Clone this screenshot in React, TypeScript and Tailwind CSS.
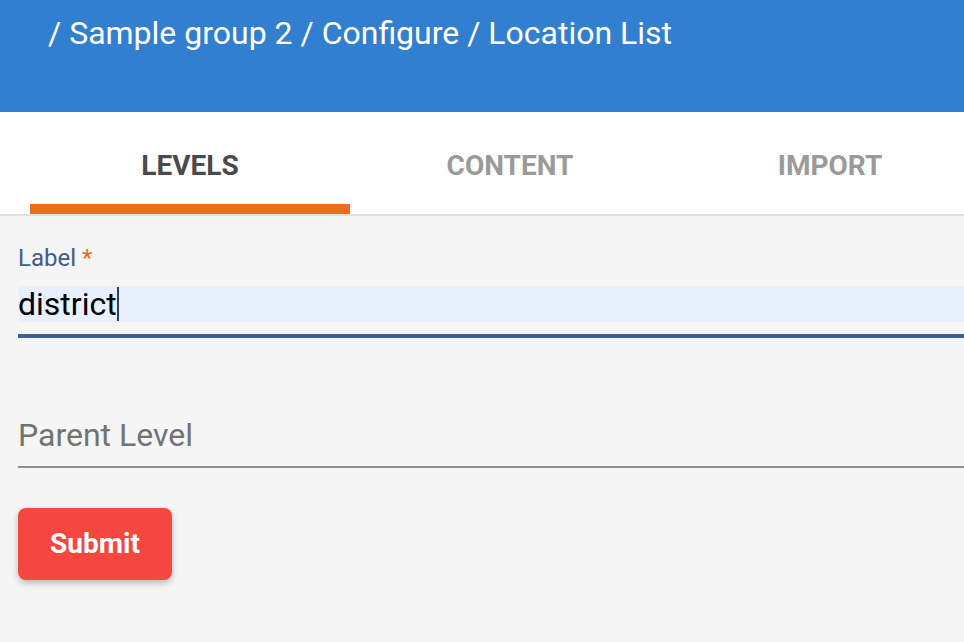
import React from 'react';

const font = { fontFamily: 'Roboto, "Liberation Sans", sans-serif' };

function Tab({ label, active }: { label: string; active?: boolean }) {
  return (
    <div className="flex w-[320px] shrink-0 flex-col items-center">
      <div
        className={`mt-[40px] text-[28px] leading-[28px] font-bold ${active ? 'text-[#4a4a4a]' : 'text-[#9a9a9a]'}`}
      >
        {label}
      </div>
      <div className={`mt-[24px] h-[10px] w-full ${active ? 'bg-[#ef6c23]' : 'bg-transparent'}`} />
    </div>
  );
}

export default function App() {
  return (
    <div className="h-[642px] w-[964px] overflow-hidden bg-[#f5f5f5]" style={font}>
      {/* breadcrumb bar */}
      <div className="h-[112px] bg-[#317fce] pl-[48px] pt-[15px]">
        <h1 className="text-[32px] leading-[36px] text-white whitespace-nowrap">
          / Sample group 2 / Configure / Location List
        </h1>
      </div>

      {/* tabs */}
      <div className="flex h-[104px] border-b-2 border-[#e0e0e0] bg-white pl-[30px]">
        <Tab label="LEVELS" active />
        <Tab label="CONTENT" />
        <Tab label="IMPORT" />
      </div>

      {/* form */}
      <div className="flex flex-col pl-[18px] pt-[30px]">
        <label className="text-[24px] leading-[24px] text-[#3f5b8c]">
          Label <span className="text-[#ef6c23]">*</span>
        </label>
        <div className="mt-[16px] flex h-[36px] items-start bg-[#e8f0fe]">
          <span className="text-[32px] leading-[36px] text-black">district</span>
          <span className="mt-[1px] h-[34px] w-[2px] bg-[#2c3e6b]" />
        </div>
        <div className="mt-[12px] h-[4px] bg-[#405d8e]" />

        <div className="mt-[79px] text-[32px] leading-[36px] text-[#737373]">Parent Level</div>
        <div className="mt-[13px] h-[2px] bg-[#8e8e8e]" />

        <div>
          <button className="mt-[40px] h-[72px] w-[154px] rounded-[8px] bg-[#f44740] text-[28px] font-bold text-white shadow-[0_3px_6px_rgba(0,0,0,0.25)]">
            Submit
          </button>
        </div>
      </div>
    </div>
  );
}
